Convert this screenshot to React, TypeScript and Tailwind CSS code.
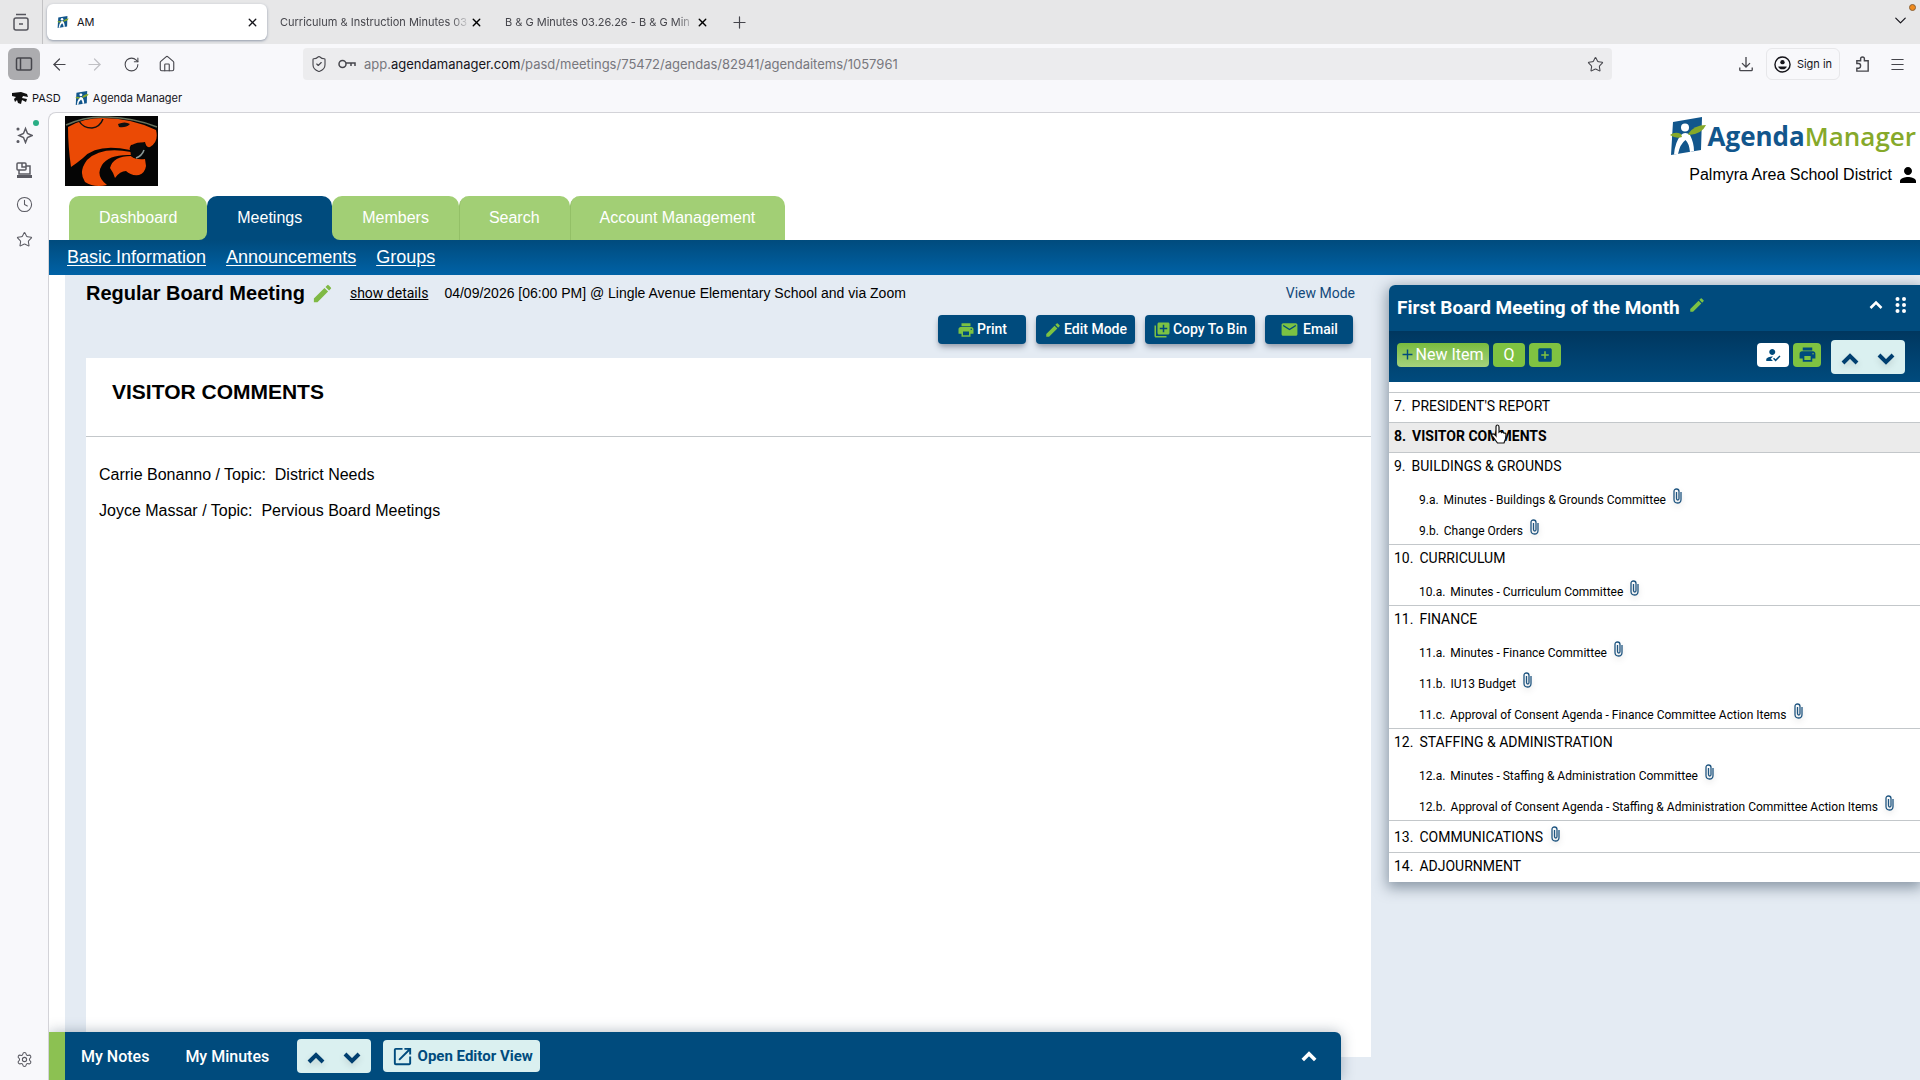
import React from "react";
import {
  ArrowLeft,
  ArrowRight,
  ChevronDown,
  Clock,
  House,
  Menu,
  Plus,
  RotateCw,
  Settings,
  ShieldCheck,
  Star,
  X,
} from "lucide-react";
import {
  MdAdd,
  MdAddBox,
  MdEdit,
  MdEmail,
  MdHowToReg,
  MdLibraryAdd,
  MdOpenInNew,
  MdPerson,
  MdPrint,
} from "react-icons/md";

interface SubItem {
  no: string;
  title: string;
}

interface AgendaItem {
  no: string;
  title: string;
  active?: boolean;
  attached?: boolean;
  children?: SubItem[];
}

const agenda: AgendaItem[] = [
  { no: "7.", title: "PRESIDENT'S REPORT" },
  { no: "8.", title: "VISITOR COMMENTS", active: true },
  {
    no: "9.",
    title: "BUILDINGS & GROUNDS",
    children: [
      { no: "9.a.", title: "Minutes - Buildings & Grounds Committee" },
      { no: "9.b.", title: "Change Orders" },
    ],
  },
  {
    no: "10.",
    title: "CURRICULUM",
    children: [{ no: "10.a.", title: "Minutes - Curriculum Committee" }],
  },
  {
    no: "11.",
    title: "FINANCE",
    children: [
      { no: "11.a.", title: "Minutes - Finance Committee" },
      { no: "11.b.", title: "IU13 Budget" },
      { no: "11.c.", title: "Approval of Consent Agenda - Finance Committee Action Items" },
    ],
  },
  {
    no: "12.",
    title: "STAFFING & ADMINISTRATION",
    children: [
      { no: "12.a.", title: "Minutes - Staffing & Administration Committee" },
      { no: "12.b.", title: "Approval of Consent Agenda - Staffing & Administration Committee Action Items" },
    ],
  },
  { no: "13.", title: "COMMUNICATIONS", attached: true },
  { no: "14.", title: "ADJOURNMENT" },
];

const BrandMark: React.FC<{ className?: string }> = ({ className }) => (
  <svg viewBox="0 0 36 38" className={className} aria-hidden="true">
    <path d="M3 5 L32 0 L31 33 L1 38 Z" fill="#12568c" />
    <circle cx="15" cy="10.500" r="4" fill="#fff" />
    <path d="M11 18 Q15 14 20 18 Q24 26 24 34 L20 35 Q19 26 15.500 23 Q10 27 8 37 L4 37.500 Q5 25 11 18Z" fill="#fff" />
    <path d="M0 18 Q5 14 11 17 L12 20 Q6 22 0 18Z" fill="#86a92a" />
    <path d="M18 17 Q24 8 36 8 Q32 17 19 18Z" fill="#86a92a" />
  </svg>
);

const Cougar = () => (
  <svg viewBox="0 0 93 70" className="h-[70px] w-[93px]" role="img" aria-label="Palmyra Cougars">
    <rect width="93" height="70" fill="#050505" />
    <path d="M3 11 Q18 2 38 2 Q66 2 91 14 Q94 26 85 31 Q81 32 80 26 L66 29 Q64 32 65 34 Q32 27 18 42 Q12 47 6 51 Q3 30 3 11Z" fill="#eb4a05" />
    <path d="M66 36 Q36 30 22 44 Q13 56 20 66 Q29 72 42 69 Q30 60 37 49 Q44 38 66 39Z" fill="#eb4a05" />
    <path d="M80 43 Q70 44 66 40 Q48 40 45 52 Q48 56 50 62 Q55 55 61 55 Q66 60 74 59 Q80 57 81 50Z" fill="#eb4a05" />
    <path d="M14 5 Q18 12 27 12 Q35 11 38 3" stroke="#111" strokeWidth="1.500" fill="none" />
    <path d="M1 9 Q20 0 42 1 Q70 2 92 11" stroke="#66705a" strokeWidth="1.500" fill="none" />
    <path d="M53 8 Q60 5 65 8 Q61 12 54 11Z" fill="#111" />
    <path d="M65 32 Q70 25 80 27 Q82 35 77 40 Q71 44 66 40Z" fill="#0a0a0a" />
    <path d="M71 42 Q77 40 79 34" stroke="#8b9997" strokeWidth="1.500" fill="none" />
  </svg>
);

const Chevron: React.FC<{ down?: boolean; className?: string }> = ({ down, className }) => (
  <svg viewBox="0 0 18 12" className={className} fill="none" stroke="currentColor" strokeWidth="4" aria-hidden="true">
    <path d={down ? "M2 2 L9 9 L16 2" : "M2 10 L9 3 L16 10"} />
  </svg>
);

const StepButtons = () => (
  <div className="flex h-[34px] w-[74px] items-center justify-center gap-[18px] rounded-sm bg-[#daf0f0] pt-1 text-[#003f70]">
    <button aria-label="Previous item">
      <Chevron className="h-3 w-[18px] drop-shadow-md" />
    </button>
    <button aria-label="Next item">
      <Chevron down className="h-3 w-[18px] drop-shadow-md" />
    </button>
  </div>
);

const BrowserChrome = () => (
  <header className="font-[Inter,sans-serif] text-[#15141a]">
    <div className="flex h-11 items-center bg-[#e7e7e8]">
      <button aria-label="Recent browsing" className="flex h-full w-[43px] items-center justify-center border-r border-[#c2c2c4]">
        <svg viewBox="0 0 18 18" className="h-[18px] w-[18px] text-[#55555c]" fill="none" stroke="currentColor" strokeWidth="1.500">
          <path d="M4 1.500 H14 M7 11 H11" />
          <rect x="2" y="5" width="14" height="12" rx="2" />
        </svg>
      </button>
      <div className="ml-1 flex h-9 w-[220px] items-center rounded-md bg-white pr-2 pl-2.5 text-[11px] shadow-sm shadow-gray-400">
        <BrandMark className="mr-2 h-3 w-3" />
        <span className="flex-1">AM</span>
        <button aria-label="Close tab"><X size={13} strokeWidth={2.5} /></button>
      </div>
      <div className="ml-[13px] flex items-center text-[11px] text-[#46464c]">
        <span className="w-[190px] whitespace-nowrap [mask-image:linear-gradient(90deg,#000_90%,transparent)]">
          Curriculum &amp; Instruction Minutes 03
        </span>
        <button aria-label="Close tab" className="text-black"><X size={13} strokeWidth={2.5} /></button>
      </div>
      <div className="ml-[22px] flex items-center text-[11px] text-[#46464c]">
        <span className="w-[191px] whitespace-nowrap [mask-image:linear-gradient(90deg,#000_90%,transparent)]">
          B &amp; G Minutes 03.26.26 - B &amp; G Min
        </span>
        <button aria-label="Close tab" className="text-black"><X size={13} strokeWidth={2.5} /></button>
      </div>
      <button aria-label="New tab" className="ml-[21px]"><Plus size={19} strokeWidth={1.5} className="text-[#45454b]" /></button>
      <div className="ml-auto flex h-full flex-col items-end pr-1">
        <span className="mt-1 h-[7px] w-[7px] rounded-full border border-[#8a6238] bg-[#f08a1d]" />
        <button aria-label="List all tabs" className="mr-1.5"><ChevronDown size={19} strokeWidth={1.5} /></button>
      </div>
    </div>

    <div className="flex h-10 items-center bg-[#f8f8fb] pr-3.5 pl-2 text-[#46464c]">
      <button aria-label="Sidebar" className="flex h-8 w-8 items-center justify-center rounded-md bg-[#acacaf]">
        <svg viewBox="0 0 18 16" className="h-4 w-[18px]" fill="none" stroke="currentColor" strokeWidth="1.500">
          <rect x="1.500" y="2" width="15" height="12" rx="1.500" />
          <path d="M5.500 2 V14" />
        </svg>
      </button>
      <button aria-label="Back" className="ml-2.5"><ArrowLeft size={19} strokeWidth={1.5} /></button>
      <button aria-label="Forward" className="ml-4 text-[#c0c0c4]"><ArrowRight size={19} strokeWidth={1.5} /></button>
      <button aria-label="Reload" className="ml-[19px]"><RotateCw size={17} strokeWidth={1.5} /></button>
      <button aria-label="Home" className="ml-[18px]"><House size={18} strokeWidth={1.5} /></button>
      <div className="ml-[127px] flex h-8 flex-1 items-center rounded-sm bg-[#ececee] pr-2 pl-[7px]">
        <ShieldCheck size={18} strokeWidth={1.5} />
        <svg viewBox="0 0 18 10" className="ml-2.5 h-2.5 w-[18px]" fill="none" stroke="currentColor" strokeWidth="1.500">
          <circle cx="4.500" cy="5" r="3.500" />
          <path d="M8 4 H17 V7 M13 4 V7" />
        </svg>
        <div className="ml-2 flex-1 pt-0.5 text-[13px] text-[#77777d]">
          app.<span className="text-[#15141a]">agendamanager.com</span>/pasd/meetings/75472/agendas/82941/agendaitems/1057961
        </div>
        <button aria-label="Bookmark this page"><Star size={17} strokeWidth={1.5} /></button>
      </div>
      <button aria-label="Downloads" className="ml-[126px]">
        <svg viewBox="0 0 18 18" className="h-4 w-4" fill="none" stroke="currentColor" strokeWidth="1.500">
          <path d="M9 1 V12 M4.500 8 L9 12.500 L13.500 8 M2 13 V15.500 Q2 16.500 3 16.500 H15 Q16 16.500 16 15.500 V13" />
        </svg>
      </button>
      <button className="ml-3 flex h-8 w-[74px] items-center justify-center gap-1.5 rounded-md border border-[#e7e7ea] text-[11px] text-[#15141a]">
        <svg viewBox="0 0 18 18" className="h-[17px] w-[17px]" fill="none" stroke="currentColor" strokeWidth="1.500">
          <circle cx="9" cy="9" r="8" />
          <circle cx="9" cy="6.500" r="2.300" fill="currentColor" stroke="none" />
          <path d="M4.500 11 H13.500 Q13 14 9 14 Q5 14 4.500 11Z" fill="currentColor" stroke="none" />
        </svg>
        Sign in
      </button>
      <button aria-label="Extensions" className="ml-3.5">
        <svg viewBox="0 0 18 18" className="h-[17px] w-[17px]" fill="none" stroke="currentColor" strokeWidth="1.500">
          <path d="M3 8 V5 H7 V3 Q7 1 9 1 Q11 1 11 3 V5 H15 V16 H3 V13 H5 Q7 12.500 7 10.500 Q7 8 5 8Z" />
        </svg>
      </button>
      <button aria-label="Menu" className="ml-[18px]"><Menu size={17} strokeWidth={1.5} /></button>
    </div>

    <div className="flex h-7 items-center bg-[#f8f8fb] pl-3 text-[11px]">
      <a href="#pasd" className="flex items-center gap-1">
        <svg viewBox="0 0 16 12" className="h-3 w-4" aria-hidden="true">
          <path d="M0 1 L9 0 L15 2 L16 5 L11 4 L10 6 L15 7 L14 10 L10 8 L9 12 L6 11 L5 8 L3 10 L2 7 L4 5 L0 4Z" fill="#111" />
        </svg>
        PASD
      </a>
      <a href="#am" className="ml-3.5 flex items-center gap-1">
        <BrandMark className="h-3.5 w-3.5" />
        Agenda Manager
      </a>
    </div>
  </header>
);

const BrowserRail = () => (
  <nav aria-label="Browser sidebar" className="flex w-12 shrink-0 flex-col items-center bg-[#f8f8fb] pt-3.5 pb-3 text-[#5b5b63]">
    <button aria-label="Assistant" className="relative">
      <svg viewBox="0 0 18 18" className="h-[18px] w-[18px]" fill="none" stroke="currentColor" strokeWidth="1.500">
        <path d="M10.500 2.500 L12.500 7.500 L17 9.500 L12.500 11.500 L10.500 16.500 L8.500 11.500 L4 9.500 L8.500 7.500Z" />
        <circle cx="3" cy="3" r="0.800" fill="currentColor" />
        <circle cx="3" cy="15.500" r="0.800" fill="currentColor" />
      </svg>
      <span className="absolute -top-1.5 -right-1.5 h-1.5 w-1.5 rounded-full bg-[#2aae85]" />
    </button>
    <button aria-label="Synced tabs" className="mt-[17px]">
      <svg viewBox="0 0 18 18" className="h-[18px] w-[18px]" fill="none" stroke="currentColor" strokeWidth="1.500">
        <rect x="2" y="2" width="9" height="7" rx="1" />
        <path d="M7 2 V6 H11 M4 9 V13 H15 V5 H11" />
        <path d="M2 15.500 H17" strokeWidth="3" />
      </svg>
    </button>
    <button aria-label="History" className="mt-[17px]"><Clock size={17} strokeWidth={1.5} /></button>
    <button aria-label="Bookmarks" className="mt-[18px]"><Star size={17} strokeWidth={1.5} /></button>
    <button aria-label="Settings" className="mt-auto"><Settings size={17} strokeWidth={1.5} /></button>
  </nav>
);

const mainTabs = [
  { label: "Dashboard", wrap: "bg-linear-to-b from-white from-50% to-[#004b7d] to-50%", link: "rounded-br-lg bg-[#a2cf75] px-[30px]" },
  { label: "Meetings", wrap: "", link: "bg-[#004b7d] px-[30px]" },
  { label: "Members", wrap: "bg-linear-to-b from-white from-50% to-[#004b7d] to-50%", link: "rounded-bl-lg bg-[#a2cf75] px-[30px]" },
  { label: "Search", wrap: "", link: "border-l border-[#93c067] bg-[#a2cf75] pr-[30px] pl-[29px]" },
  { label: "Account Management", wrap: "", link: "border-l border-[#93c067] bg-[#a2cf75] pr-[30px] pl-[29px]" },
];

const SiteHeader = () => (
  <>
    <div className="flex justify-between pt-[3px] pl-4">
      <Cougar />
      <div className="flex flex-col items-end pr-1 font-['Liberation_Sans',Arial,sans-serif]">
        <div className="flex items-center">
          <BrandMark className="h-[38px] w-9" />
          <span className="ml-0.5 font-['Open_Sans',sans-serif] text-[26px] leading-10 font-bold text-[#12568c]">
            Agenda<span className="font-semibold text-[#86a92a]">Manager</span>
          </span>
        </div>
        <div className="flex items-center gap-1 pt-px text-[16px] leading-9 text-black">
          Palmyra Area School District
          <MdPerson size={24} className="-mr-1" />
        </div>
      </div>
    </div>
    <nav className="font-['Liberation_Sans',Arial,sans-serif]">
      <div className="flex pl-5 pt-[3px]">
        {mainTabs.map((tab) => (
          <div key={tab.label} className={tab.wrap}>
            <a href={`#${tab.label}`} className={`flex h-11 items-center rounded-t-[10px] text-[16px] text-white ${tab.link}`}>
              {tab.label}
            </a>
          </div>
        ))}
      </div>
      <div className="flex h-[35px] items-center gap-5 bg-linear-to-b from-[#004b7d] to-[#0062a6] pl-[18px] text-[18px] text-white">
        <a href="#basic" className="underline underline-offset-2">Basic Information</a>
        <a href="#announcements" className="underline underline-offset-2">Announcements</a>
        <a href="#groups" className="underline underline-offset-2">Groups</a>
      </div>
    </nav>
  </>
);

const actionClass =
  "flex h-[29px] items-center justify-center rounded-sm bg-[#004b7d] text-[14px] font-medium text-white shadow-md shadow-gray-400";

const MeetingPane = () => (
  <main className="flex min-w-0 flex-1 flex-col pb-[23px] pl-[21px]">
    <div className="flex h-9 items-center pr-4 font-['Liberation_Sans',Arial,sans-serif] text-[14px] text-black">
      <h1 className="text-[20px] font-bold">Regular Board Meeting</h1>
      <button aria-label="Edit meeting" className="ml-1.5 text-[#7fb944]"><MdEdit size={23} /></button>
      <a href="#details" className="ml-4 font-[Roboto,sans-serif] underline">show details</a>
      <span className="ml-4">04/09/2026 [06:00 PM] @ Lingle Avenue Elementary School and via Zoom</span>
      <a href="#view" className="ml-auto font-[Roboto,sans-serif] text-[#12497a]">View Mode</a>
    </div>
    <div className="flex justify-end gap-2.5 pt-1 pr-[18px] font-[Roboto,sans-serif]">
      <button className={`${actionClass} w-[88px] gap-0.5`}><MdPrint size={18} className="text-[#7cc243]" />Print</button>
      <button className={`${actionClass} w-[99px] gap-0.5`}><MdEdit size={18} className="text-[#7cc243]" />Edit Mode</button>
      <button className={`${actionClass} w-[110px] gap-0.5`}><MdLibraryAdd size={18} className="text-[#7cc243]" />Copy To Bin</button>
      <button className={`${actionClass} w-[88px] gap-1`}><MdEmail size={19} className="text-[#7cc243]" />Email</button>
    </div>
    <article className="mt-3.5 flex-1 bg-white font-['Liberation_Sans',Arial,sans-serif] text-black">
      <div className="flex h-[79px] items-center border-b border-[#c3c7ca] pb-2.5 pl-[26px]">
        <h2 className="text-[21px] font-bold">VISITOR COMMENTS</h2>
      </div>
      <div className="space-y-3 pt-[26px] pl-[13px] text-[16px] leading-6 whitespace-pre">
        <p>{"Carrie Bonanno / Topic:  District Needs"}</p>
        <p>{"Joyce Massar / Topic:  Pervious Board Meetings"}</p>
      </div>
    </article>
  </main>
);

const Clip = () => (
  <svg viewBox="0 0 9 16" className="mb-2 ml-0.5 h-4 w-[9px] text-[#1f5580] drop-shadow-md" fill="none" stroke="currentColor" strokeWidth="1.300" role="img" aria-label="Attachment">
    <path d="M8 4 V11.500 Q8 15 4.500 15 Q1 15 1 11.500 V3.500 Q1 1 3.500 1 Q6 1 6 3.500 V10.500 Q6 12 4.800 12 Q3.500 12 3.500 10.500 V4" />
  </svg>
);

const AgendaPanel = () => (
  <aside className="mt-2.5 w-[531px] shrink-0 self-start rounded-tl-md bg-white font-[Roboto,sans-serif] text-black shadow-[0_4px_14px_2px_rgba(50,70,90,0.5)]">
    <div className="rounded-tl-md bg-[#004b7d] text-white">
      <div className="flex h-[46px] items-center pr-[13px] pl-2">
        <h2 className="text-[19px] font-bold">First Board Meeting of the Month</h2>
        <button aria-label="Rename agenda" className="ml-2 pb-1.5 text-[#7cc243]"><MdEdit size={18} /></button>
        <button aria-label="Collapse agenda" className="ml-auto pb-1.5">
          <svg viewBox="0 0 14 10" className="h-2.5 w-3.5" fill="none" stroke="currentColor" strokeWidth="2.500">
            <path d="M1.500 8 L7 2.500 L12.500 8" />
          </svg>
        </button>
        <button aria-label="Move panel" className="ml-3 pb-1.5">
          <svg viewBox="0 0 12 18" className="h-[18px] w-3" fill="currentColor">
            <circle cx="2.500" cy="3" r="2" /><circle cx="9" cy="3" r="2" />
            <circle cx="2.500" cy="9" r="2" /><circle cx="9" cy="9" r="2" />
            <circle cx="2.500" cy="15" r="2" /><circle cx="9" cy="15" r="2" />
          </svg>
        </button>
      </div>
      <div className="flex h-[51px] items-center gap-1 bg-linear-to-b from-[#00375f] via-[#00416f] to-[#004b7d] pr-[15px] pb-1 pl-2 text-[16px]">
        <button className="flex h-6 w-[92px] items-center justify-center rounded-sm bg-linear-to-b from-[#79bb3d] to-[#a5d27c] pr-1">
          <MdAdd size={17} className="text-[#004b7d]" />
          New Item
        </button>
        <button className="h-6 w-8 rounded-sm bg-[#7fc241]">Q</button>
        <button aria-label="Add section" className="flex h-6 w-8 items-center justify-center rounded-sm bg-[#7fc241] text-[#004b7d]"><MdAddBox size={18} /></button>
        <button aria-label="Attendance" className="ml-auto flex h-6 w-8 items-center justify-center rounded-sm bg-white text-[#004b7d]"><MdHowToReg size={18} /></button>
        <button aria-label="Print agenda" className="flex h-6 w-7 items-center justify-center rounded-sm bg-[#7fc241] text-[#004b7d]"><MdPrint size={19} /></button>
        <div className="ml-1.5 pt-1"><StepButtons /></div>
      </div>
    </div>
    <ol className="pt-2.5">
      {agenda.map((item) => (
        <li key={item.no} className={`relative border-t border-[#c3c7ca] ${item.active ? "bg-[#ebebeb] font-bold" : ""}`}>
          <a
            href={`#item-${item.no}`}
            className={`flex items-center gap-1.5 pl-[5px] text-[14px] ${item.attached ? "h-[31px] pt-0.5" : "h-[29px] pb-0.5"}`}
          >
            <span>{item.no}</span>
            {item.title}
            {item.attached && <Clip />}
          </a>
          {item.children?.map((sub) => (
            <a
              key={sub.no}
              href={`#item-${sub.no}`}
              className="flex h-[31px] items-center gap-[5px] pt-1 pl-[30px] text-[12px]"
            >
              <span>{sub.no}</span>
              {sub.title}
              <Clip />
            </a>
          ))}
          {item.active && (
            <svg viewBox="0 0 18 20" className="absolute top-px left-[101px] h-5 w-[18px]" fill="#fff" stroke="#111" strokeWidth="1.200">
              <path d="M6 11 V3 Q6 1 7.500 1 Q9 1 9 3 V8 Q10.500 6.500 11.500 8.500 Q13 7.300 14 9.200 Q16 8.500 16 11 L15.500 15 L14 19 H7.500 L3 13 Q1 11 2.500 10 Q4 9.500 6 12Z" />
            </svg>
          )}
        </li>
      ))}
    </ol>
  </aside>
);

const NotesBar = () => (
  <footer className="absolute bottom-0 left-0 flex h-12 w-[calc(100%-579px)] items-center rounded-tr-md border-l-[16px] border-[#8cc152] bg-[#004b7d] px-4 font-[Roboto,sans-serif] text-[16px] font-medium text-white shadow-[0_0_14px_rgba(60,80,100,0.4)]">
    <button className="pt-0.5">My Notes</button>
    <button className="ml-9 pt-0.5">My Minutes</button>
    <div className="ml-7"><StepButtons /></div>
    <button className="ml-3 flex h-8 w-[157px] items-center justify-center gap-1 rounded-sm bg-[#daf0f0] text-[15px] font-bold text-[#004b7d]">
      <MdOpenInNew size={23} />
      Open Editor View
    </button>
    <button aria-label="Expand notes" className="mr-2 ml-auto"><Chevron className="h-[11px] w-4" /></button>
  </footer>
);

export default function App() {
  return (
    <div className="flex min-h-screen flex-col bg-white">
      <BrowserChrome />
      <div className="flex flex-1 bg-[#f8f8fb]">
        <BrowserRail />
        <div className="relative flex min-w-0 flex-1 flex-col overflow-hidden rounded-tl-lg border-t border-l border-[#d3d3d8] bg-white">
          <SiteHeader />
          <div className="ml-4 flex flex-1 gap-[18px] bg-[#e4ebf3]">
            <MeetingPane />
            <AgendaPanel />
          </div>
          <NotesBar />
        </div>
      </div>
    </div>
  );
}
